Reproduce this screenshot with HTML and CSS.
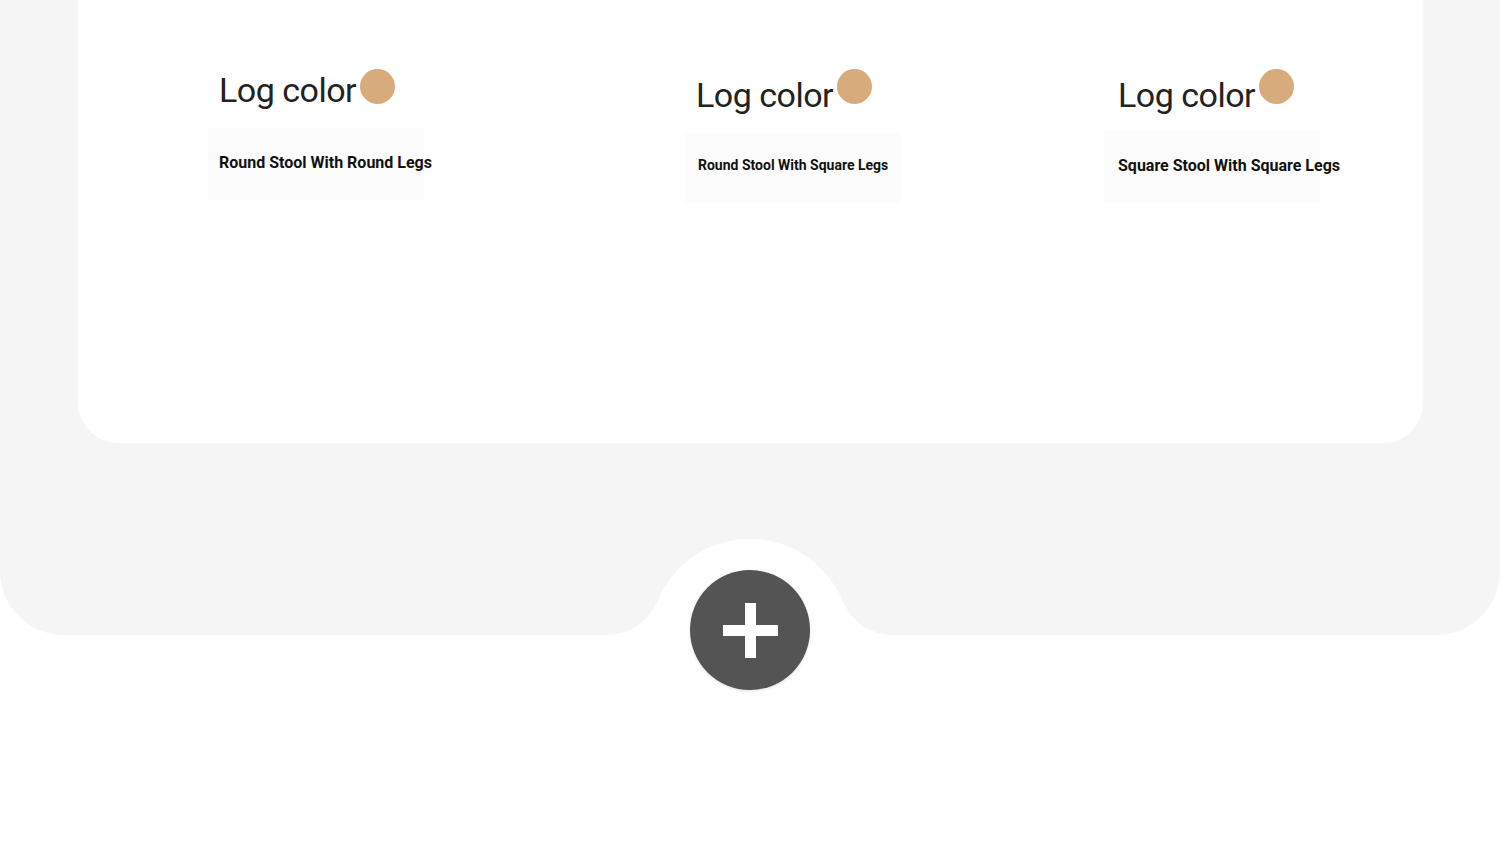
FILE: index.html
```html
<!DOCTYPE html>
<html lang="en">
<head>
    <meta charset="UTF-8">
    <meta name="viewport" content="width=device-width, initial-scale=1.0">
    <title>Stools</title>
    <link rel="stylesheet" href="styles.css">
</head>
<body>
    <div class="panel">
        <div class="card">
            <div class="item item--one">
                <div class="swatch">
                    <span class="swatch-text">Log color</span>
                    <span class="dot"></span>
                </div>
                <div class="label">Round Stool With Round Legs</div>
            </div>
            <div class="item item--two">
                <div class="swatch">
                    <span class="swatch-text">Log color</span>
                    <span class="dot"></span>
                </div>
                <div class="label">Round Stool With Square Legs</div>
            </div>
            <div class="item item--three">
                <div class="swatch">
                    <span class="swatch-text">Log color</span>
                    <span class="dot"></span>
                </div>
                <div class="label">Square Stool With Square Legs</div>
            </div>
        </div>

        <!-- bump under the add button -->
        <svg class="notch" width="320" height="110" viewBox="590 535 320 110">
            <path d="M606.7 635 A55 55 0 0 0 657.5 601 A100 100 0 0 1 842.5 601 A55 55 0 0 0 893.3 635 L893.3 645 L606.7 645 Z" fill="#fff"/>
        </svg>
        <div class="fab">
            <span class="fab-h"></span>
            <span class="fab-v"></span>
        </div>
    </div>
</body>
</html>
```
FILE: styles.css
```css
* {
    margin: 0;
    padding: 0;
    box-sizing: border-box;
}
body {
    background: #fff;
    font-family: Roboto, "Liberation Sans", sans-serif;
    color: #111;
    height: 849px;
    overflow: hidden;
}
.panel {
    position: relative;
    height: 635px;
    background: #f5f5f5;
    border-radius: 0 0 64px 64px;
    padding: 0 77px 0 78px;
}
.card {
    height: 443px;
    background: #fff;
    border-radius: 0 0 40px 40px;
    padding: 69px 0 0 130px;
    display: flex;
    align-items: flex-start;
}
.item {
    width: 216px;
}
.item--two {
    margin-left: 261px;
}
.item--three {
    margin-left: 203px;
}
.swatch {
    display: flex;
    align-items: flex-start;
    height: 44px;
    padding-left: 11px;
}
.item--three .swatch {
    padding-left: 14px;
}
.swatch-text {
    font-size: 34px;
    line-height: 40px;
    letter-spacing: -0.5px;
    color: #222;
    white-space: nowrap;
    margin-top: 1px;
}
.item--two .swatch-text,
.item--three .swatch-text {
    margin-top: 6px;
}
.dot {
    width: 35px;
    height: 35px;
    border-radius: 50%;
    background: #d8ab7c;
    margin-left: 4px;
    flex-shrink: 0;
}
.label {
    background: #fcfcfc;
    font-weight: 700;
    font-size: 16px;
    line-height: 20px;
    white-space: nowrap;
    margin-top: 15px;
    height: 72px;
    padding: 25px 0 0 11px;
}
.item--two .label {
    font-size: 14px;
    margin-top: 20px;
    height: 70px;
    padding: 22px 0 0 13px;
}
.item--three .label {
    margin-top: 17px;
    height: 73px;
    padding: 26px 0 0 14px;
}
.notch {
    position: absolute;
    left: 590px;
    top: 535px;
    display: block;
}
.fab {
    position: absolute;
    left: 690px;
    top: 570px;
    width: 120px;
    height: 120px;
    border-radius: 50%;
    background: #545454;
    box-shadow: 0 1px 3px rgba(0, 0, 0, 0.12);
}
.fab-h {
    position: absolute;
    left: 33px;
    top: 55px;
    width: 55px;
    height: 11px;
    background: #fff;
}
.fab-v {
    position: absolute;
    left: 55px;
    top: 33px;
    width: 11px;
    height: 55px;
    background: #fff;
}
```
